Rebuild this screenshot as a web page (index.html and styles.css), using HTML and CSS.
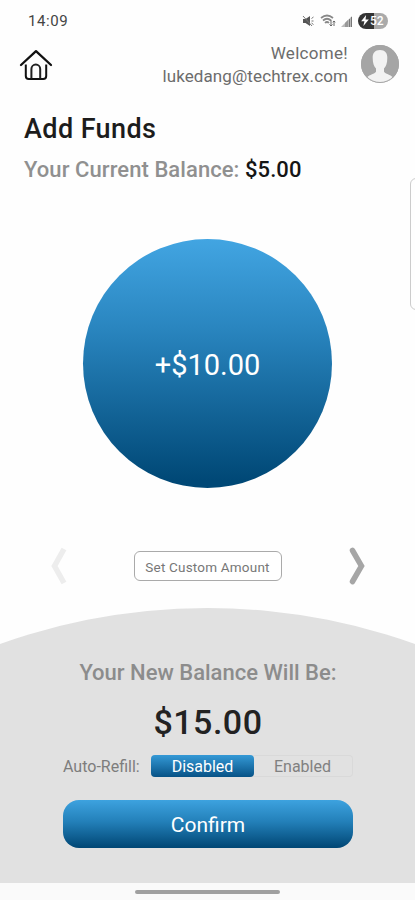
FILE: index.html
```html
<!DOCTYPE html>
<html lang="en">
<head>
    <meta charset="utf-8">
    <meta name="viewport" content="width=device-width, initial-scale=1">
    <title>Add Funds</title>
    <link rel="stylesheet" href="styles.css">
</head>
<body>
    <div class="screen">
        <div class="status">
            <span class="time">14:09</span>
            <div class="status-icons">
                <svg class="mute" width="12" height="12" viewBox="0 0 12 12">
                    <path d="M1 4h2.500L8 1v10L3.500 8H1z" fill="#555"/>
                    <path d="M1 1l9 10M9.500 3.500l2-1.500M9.500 6h2M9.500 8l2 1.500" stroke="#777" fill="none"/>
                </svg>
                <svg class="wifi" width="16" height="14" viewBox="0 0 16 14">
                    <path d="M1 4q6-5 12 0M3 6.500q4-3.500 8 0M5 9q2-2 4 0" stroke="#888" stroke-width="1.700" fill="none"/>
                    <path d="M11 6v6M9.500 10.500l1.500 1.500 1.500-1.500M14 12V7M12.700 8.200L14 7l1.300 1.200" stroke="#666" fill="none"/>
                </svg>
                <svg class="signal" width="12" height="12" viewBox="0 0 12 12">
                    <path d="M0 12L11 1v11z" fill="#bbb"/>
                    <path d="M4 12V8l3-3v7z" fill="#999"/>
                    <path d="M8.500 12V4M10.500 12V2" stroke="#777"/>
                </svg>
                <div class="battery">
                    <svg width="8" height="11" viewBox="0 0 7 10"><path d="M4.500 0L0 5.700h3L2 10l5-6H4z" fill="#fff"/></svg>
                    <span>52</span>
                </div>
            </div>
        </div>

        <div class="header">
            <svg class="home" width="34" height="32" viewBox="0 0 34 32">
                <path d="M2 16L17 2.200 32 16" fill="none" stroke="#111" stroke-width="2.300" stroke-linecap="round" stroke-linejoin="round"/>
                <path d="M6.800 15.500V27q0 3 3 3h14.400q3 0 3-3V15.500" fill="none" stroke="#111" stroke-width="2"/>
                <path d="M12.400 29.500V20a4.400 4.400 0 0 1 8.800 0v9.500" fill="none" stroke="#222" stroke-width="2"/>
            </svg>
            <div class="user">
                <p class="welcome">Welcome!</p>
                <p class="email">lukedang@techtrex.com</p>
            </div>
            <svg class="avatar" width="40" height="40" viewBox="0 0 40 40">
                <circle cx="20" cy="19" r="19" fill="#a5a5a5"/>
                <path d="M20 5c-5 0-7.500 3-7.300 8 0 5 1.300 8.500 3.300 10.500v3.200c-1.500 2.300-6 2.600-9.200 5.800Q12 37.700 20 37.700t13.200-5.200c-3.200-3.200-7.700-3.500-9.200-5.800v-3.200c2-2 3.300-5.500 3.300-10.500.2-5-2.300-8-7.300-8z" fill="#f2f2f2"/>
                <circle cx="20" cy="19" r="18.500" fill="none" stroke="#a5a5a5"/>
            </svg>
        </div>

        <div class="title">
            <h1>Add Funds</h1>
            <p class="balance">Your Current Balance: <b>$5.00</b></p>
        </div>
        <div class="edge-panel"></div>

        <div class="amount">+$10.00</div>

        <div class="picker">
            <svg width="20" height="40" viewBox="0 0 20 40">
                <path d="M17 3L7.500 20 17 37" fill="none" stroke="#ededed" stroke-width="5.500"/>
            </svg>
            <button class="custom">Set Custom Amount</button>
            <svg width="20" height="40" viewBox="0 0 20 40">
                <path d="M4.500 4.500L13.500 20 4.500 35.500" fill="none" stroke="#a6a6a6" stroke-width="5.500" stroke-linecap="round"/>
            </svg>
        </div>

        <div class="bottom">
            <p class="new-label">Your New Balance Will Be:</p>
            <p class="new-balance">$15.00</p>
            <div class="refill">
                <span class="refill-label">Auto-Refill:</span>
                <div class="toggle">
                    <span class="option active">Disabled</span>
                    <span class="option">Enabled</span>
                </div>
            </div>
            <button class="confirm">Confirm</button>
        </div>

        <div class="navbar"><div class="handle"></div></div>
    </div>
</body>
</html>
```
FILE: styles.css
```css
*{
    margin: 0;
    padding: 0;
    box-sizing: border-box;
    font-family: Roboto, sans-serif;
}
body{
    background: #fefefe;
}
.screen{
    position: relative;
    width: 415px;
    height: 900px;
    overflow: hidden;
    display: flex;
    flex-direction: column;
    white-space: nowrap;
}
.status{
    height: 41px;
    padding: 0 27px 0 28px;
    display: flex;
    align-items: center;
    justify-content: space-between;
}
.time{
    font-size: 15px;
    letter-spacing: 0.6px;
    color: #444;
}
.status-icons{
    display: flex;
    align-items: center;
}
.wifi{
    margin-left: 6px;
}
.signal{
    margin-left: 5px;
}
.battery{
    width: 30px;
    height: 16px;
    margin-left: 5px;
    padding-left: 3px;
    border-radius: 8px;
    background: linear-gradient(90deg, #333 53%, #aaa 53%);
    display: flex;
    align-items: center;
    gap: 1px;
}
.battery span{
    font-size: 12px;
    font-weight: 500;
    color: #fff;
}
.header{
    height: 48px;
    padding: 0 15px 0 19px;
    display: flex;
    align-items: center;
}
.user{
    flex: 1;
    text-align: right;
    padding-right: 12px;
    font-size: 17px;
    line-height: 23px;
    color: #6c6c6c;
}
.welcome{
    letter-spacing: 0.3px;
}
.email{
    letter-spacing: 0.1px;
}
.title{
    height: 150px;
    padding: 24px 24px 0;
}
.title h1{
    font-size: 27px;
    line-height: 32px;
    font-weight: 500;
    letter-spacing: 0.4px;
    color: #1c1c1c;
}
.balance{
    margin-top: 13px;
    font-size: 22px;
    line-height: 24px;
    font-weight: 500;
    letter-spacing: 0.07px;
    color: #909090;
}
.balance b{
    font-weight: 500;
    color: #151515;
}
/* system edge handle, sits over the page */
.edge-panel{
    position: absolute;
    top: 178px;
    right: -10px;
    width: 15px;
    height: 132px;
    border: 1px solid #ccc;
    border-radius: 6px;
}
.amount{
    width: 249px;
    height: 249px;
    margin: 0 auto;
    border-radius: 50%;
    background: linear-gradient(#42a5e2, #2a86c0 35%, #004876 97%);
    color: #fff;
    font-size: 29px;
    line-height: 252px;
    text-align: center;
}
.picker{
    height: 120px;
    padding: 36px 47px 0;
    display: flex;
    align-items: center;
    justify-content: space-between;
}
.custom{
    width: 148px;
    height: 30px;
    padding-top: 1px;
    border: 1px solid #aaa;
    border-radius: 6px;
    background: #fff;
    color: #777;
    font-size: 13.5px;
    letter-spacing: 0.2px;
}
.bottom{
    height: 275px;
    padding: 50px 62px 0 63px;
    background: #e1e1e1;
    clip-path: circle(616px at 50% 616px);
    text-align: center;
}
.new-label{
    font-size: 22px;
    line-height: 29px;
    font-weight: 500;
    color: #8c8c8c;
}
.new-balance{
    margin-top: 14px;
    font-size: 34px;
    line-height: 42px;
    font-weight: 500;
    letter-spacing: 0.5px;
    color: #222;
}
.refill{
    margin-top: 12px;
    display: flex;
    justify-content: space-between;
    align-items: center;
}
.refill-label{
    font-size: 16px;
    line-height: 23px;
    height: 22px;
    color: #7d7d7d;
}
.toggle{
    width: 202px;
    height: 22px;
    display: flex;
    border-radius: 4px;
    box-shadow: inset 0 0 0 1px #d9d9d9;
}
.option{
    flex: 1;
    padding-right: 2px;
    font-size: 16px;
    line-height: 24px;
    color: #808080;
}
.active{
    flex: 0 0 103px;
    height: 22px;
    padding: 0;
    border-radius: 4px;
    background: linear-gradient(#3499d6, #075286);
    color: #fff;
}
.confirm{
    display: block;
    width: 290px;
    height: 48px;
    margin-top: 23px;
    padding-top: 2px;
    border: 0;
    border-radius: 16px;
    background: linear-gradient(#3da2df, #2380b9 45%, #004674);
    color: #fff;
    font-size: 21px;
}
.navbar{
    height: 17px;
    padding-top: 7px;
    background: #fafafa;
}
.handle{
    width: 145px;
    height: 4px;
    margin: 0 auto;
    border-radius: 2px;
    background: #a0a0a0;
}
```
